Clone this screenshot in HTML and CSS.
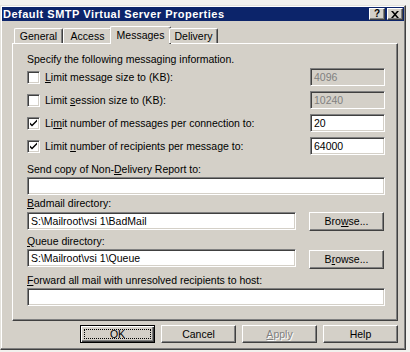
FILE: index.html
```html
<!DOCTYPE html>
<html>
<head>
<meta charset="utf-8">
<link rel="stylesheet" href="styles.css">
</head>
<body>
<div class="window">
  <div class="titlebar">
    <span class="title">Default SMTP Virtual Server Properties</span>
    <div class="tbtns">
      <span class="tbtn help">?</span>
      <span class="tbtn close"><svg width="8" height="7" viewBox="0 0 8 7"><path d="M0 0h2l2 2.3L6 0h2L5 3.5 8 7H6L4 4.7 2 7H0l3-3.5z" fill="#000"/></svg></span>
    </div>
  </div>
  <div class="tabs">
    <div class="tab t-general">General</div>
    <div class="tab t-access">Access</div>
    <div class="tab active t-messages">Messages</div>
    <div class="tab t-delivery">Delivery</div>
  </div>
  <div class="panel">
    <div class="intro">Specify the following messaging information.</div>
    <div class="rows">
      <div class="row">
        <span class="check"></span>
        <span class="label"><u>L</u>imit message size to (KB):</span>
        <span class="field small disabled">4096</span>
      </div>
      <div class="row">
        <span class="check"></span>
        <span class="label">Limit <u>s</u>ession size to (KB):</span>
        <span class="field small disabled">10240</span>
      </div>
      <div class="row">
        <span class="check checked"><svg width="9" height="9" viewBox="0 0 9 9"><path d="M1 3.5l2 2 5-5v2l-5 5-2-2z" fill="#000"/></svg></span>
        <span class="label">Li<u>m</u>it number of messages per connection to:</span>
        <span class="field small">20</span>
      </div>
      <div class="row">
        <span class="check checked"><svg width="9" height="9" viewBox="0 0 9 9"><path d="M1 3.5l2 2 5-5v2l-5 5-2-2z" fill="#000"/></svg></span>
        <span class="label">Limit <u>n</u>umber of recipients per message to:</span>
        <span class="field small">64000</span>
      </div>
    </div>
    <div class="caption c-ndr">Send copy of Non-<u>D</u>elivery Report to:</div>
    <div class="field wide"></div>
    <div class="caption c-bad"><u>B</u>admail directory:</div>
    <div class="pathrow">
      <div class="field path">S:\Mailroot\vsi 1\BadMail</div>
      <div class="btn browse">Bro<u>w</u>se...</div>
    </div>
    <div class="caption c-queue"><u>Q</u>ueue directory:</div>
    <div class="pathrow">
      <div class="field path">S:\Mailroot\vsi 1\Queue</div>
      <div class="btn browse low">B<u>r</u>owse...</div>
    </div>
    <div class="caption c-fwd"><u>F</u>orward all mail with unresolved recipients to host:</div>
    <div class="field wide"></div>
  </div>
  <div class="buttons">
    <div class="btn default"><span class="focus">OK</span></div>
    <div class="btn">Cancel</div>
    <div class="btn disabled"><u>A</u>pply</div>
    <div class="btn">Help</div>
  </div>
</div>
</body>
</html>
```
FILE: styles.css
```css
* { box-sizing: border-box; }
html, body { margin: 0; padding: 0; }
body {
  width: 410px;
  height: 352px;
  overflow: hidden;
  background: #f2f1ee;
  font-family: "Liberation Sans", Arial, sans-serif;
  font-size: 10.5px;
  color: #000;
}
u { text-decoration: underline; text-underline-offset: 1px; }

.window {
  margin-top: 5px;
  width: 406px;
  height: 345px;
  background: #d4d0c8;
  border: 1px solid;
  border-color: #e4e2dc #404040 #404040 #e4e2dc;
  box-shadow: inset -1px -1px #808080, inset 1px 1px #fff;
  padding: 1px;
  display: flex;
  flex-direction: column;
}

.titlebar {
  height: 14px;
  background: #0c246a;
  color: #fff;
  display: flex;
  align-items: center;
  justify-content: space-between;
  padding-left: 1px;
  padding-right: 1px;
}
.title {
  font-weight: bold;
  font-size: 11px;
  letter-spacing: 0.5px;
}
.tbtns { display: flex; gap: 2px; }
.tbtn {
  width: 16px;
  height: 12px;
  background: #d4d0c8;
  border: 1px solid;
  border-color: #fff #404040 #404040 #fff;
  box-shadow: inset -1px -1px #808080;
  color: #000;
  font-weight: bold;
  font-size: 10px;
  line-height: 10px;
  display: flex;
  align-items: center;
  justify-content: center;
}

.tabs {
  margin-top: 5px;
  height: 17px;
  display: flex;
  align-items: flex-end;
  padding-left: 12px;
  position: relative;
  z-index: 1;
}
.tab {
  height: 15px;
  border-top: 1px solid #fff;
  border-left: 1px solid #fff;
  border-right: 1px solid #404040;
  border-radius: 2px 2px 0 0;
  box-shadow: inset -1px 0 #808080;
  display: flex;
  align-items: center;
  justify-content: center;
  padding-bottom: 1px;
  background: #d4d0c8;
}
.t-general { width: 49px; }
.t-access { width: 49px; }
.t-delivery { width: 49px; }
.tab.active {
  height: 18px;
  margin: 0 -2px -1px;
  width: 61px;
  padding-bottom: 2px;
}

.panel {
  height: 278px;
  margin-left: 10px;
  margin-right: 6px;
  border: 1px solid;
  border-color: #fff #404040 #404040 #fff;
  box-shadow: inset -1px -1px #808080;
  padding: 9px 12px 0 14px;
  display: flex;
  flex-direction: column;
}
.intro { line-height: 13px; }
.rows {
  margin-top: 2px;
  display: flex;
  flex-direction: column;
  gap: 5px;
}
.row {
  height: 18px;
  display: flex;
  align-items: center;
}
.label { flex: 1; margin-left: 5px; }
.check {
  width: 13px;
  height: 13px;
  background: #fff;
  border: 1px solid;
  border-color: #808080 #fff #fff #808080;
  box-shadow: inset 1px 1px #404040, inset -1px -1px #d4d0c8;
  display: flex;
  align-items: center;
  justify-content: center;
  margin-top: 1px;
}

.field {
  height: 18px;
  background: #fff;
  border: 1px solid;
  border-color: #808080 #fff #fff #808080;
  box-shadow: inset 1px 1px #404040, inset -1px -1px #d4d0c8;
  padding: 2px 3px 0;
  line-height: 13px;
  white-space: nowrap;
}
.field.small { width: 75px; }
.field.disabled { background: #d4d0c8; color: #808080; }
.field.wide { width: 100%; }

.caption { line-height: 13px; }
.c-ndr { margin-top: 8px; margin-bottom: 1px; }
.c-bad { margin-top: 2px; margin-bottom: 2px; }
.c-queue { margin-top: 4px; margin-bottom: 1px; }
.c-fwd { margin-top: 5px; margin-bottom: 1px; }

.pathrow {
  display: flex;
  align-items: flex-start;
  gap: 13px;
}
.field.path { width: 269px; }

.btn {
  width: 75px;
  height: 18px;
  background: #d4d0c8;
  border: 1px solid;
  border-color: #fff #404040 #404040 #fff;
  box-shadow: inset -1px -1px #808080;
  display: flex;
  align-items: center;
  justify-content: center;
  padding-bottom: 1px;
}
.btn.browse { height: 19px; }
.btn.low { margin-top: 1px; }

.buttons {
  margin-top: 4px;
  margin-right: 6px;
  display: flex;
  justify-content: flex-end;
  gap: 6px;
}
.btn.default {
  border: 1px solid #000;
  box-shadow: inset 1px 1px #fff, inset -1px -1px #404040, inset -2px -2px #808080;
  padding: 3px;
}
.focus {
  flex: 1;
  align-self: stretch;
  border: 1px dotted #000;
  display: flex;
  align-items: center;
  justify-content: center;
}
.btn.disabled {
  color: #808080;
  text-shadow: 1px 1px #fff;
}
```
